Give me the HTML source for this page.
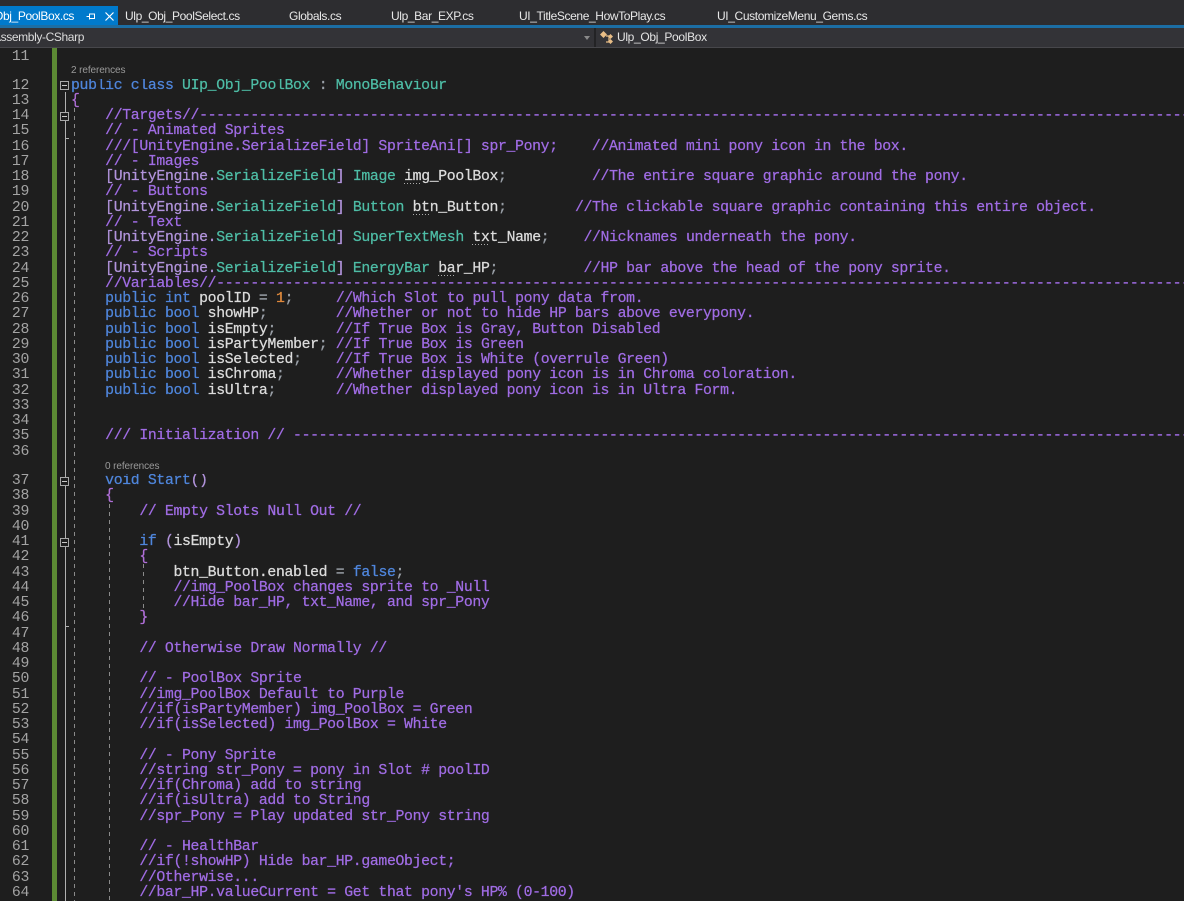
<!DOCTYPE html>
<html><head><meta charset="utf-8"><style>
html,body{margin:0;padding:0;background:#1e1e1e}
body{width:1184px;height:901px;overflow:hidden;position:relative;font-family:"Liberation Sans",sans-serif}
.a{position:absolute}
.tab{position:absolute;top:9px;font-size:12px;line-height:15px;color:#e8e8e8;white-space:pre;letter-spacing:-.38px}
pre{position:absolute;margin:0;font-family:"Liberation Mono",monospace;font-size:14.8px;letter-spacing:-.34px;line-height:15.25px;white-space:pre;color:#dcdcdc;-webkit-text-stroke:.25px}
.code{left:71px;width:1113px;overflow:hidden}
.num{left:0;width:29px;text-align:right;color:#a4a4a4;-webkit-text-stroke:0}
.c{color:#a06ce4}.k{color:#4f86dc}.t{color:#4ebda6}.b{color:#b294dc}.o{color:#e08a3c}.g{color:#9aa0a8}.m{color:#b06fd8}
u{text-decoration:none;background:repeating-linear-gradient(90deg,#aaa 0 1px,transparent 1px 3px) no-repeat 0 calc(100% - 1px)/100% 1px}
.box{position:absolute;left:60px;width:9px;height:9px;box-sizing:border-box;border:1px solid #a8a8a8;background:#1e1e1e}
.box:after{content:"";position:absolute;left:1px;top:3px;width:5px;height:1px;background:#c8c8c8}
.dash{position:absolute;width:1px;background:repeating-linear-gradient(to bottom,#8a8a8a 0 4px,transparent 4px 8px)}
.ref{position:absolute;font-size:10px;line-height:12px;color:#9a9a9a;letter-spacing:-.1px}
</style></head><body>
<div class="a" style="left:0;top:0;width:1184px;height:48px;background:#2d2d30"></div>
<div class="a" style="left:0;top:6px;width:118px;height:20px;background:#007acc"></div>
<div class="a" style="left:0;top:25px;width:1184px;height:3px;background:#1c6ea4"></div>
<div class="a" style="left:0;top:28px;width:1184px;height:19px;background:#333337"></div>
<div class="a" style="left:0;top:47px;width:1184px;height:1px;background:#47474b"></div>
<div class="tab" style="left:-6px;color:#fff">Obj_PoolBox.cs</div>
<svg class="a" style="left:85px;top:10px" width="30" height="13" viewBox="0 0 30 13"><path d="M1.5 6.5H4.5M4.5 3.5V9.5M4.5 4H9.5V8.5H4.5" stroke="#fff" fill="none" stroke-width="1"/><path d="M20.5 2.5L28.5 10.5M28.5 2.5L20.5 10.5" stroke="#fff" fill="none" stroke-width="1.2"/></svg>
<div class="tab" style="left:125px">Ulp_Obj_PoolSelect.cs</div>
<div class="tab" style="left:289px">Globals.cs</div>
<div class="tab" style="left:391px">Ulp_Bar_EXP.cs</div>
<div class="tab" style="left:519px">UI_TitleScene_HowToPlay.cs</div>
<div class="tab" style="left:717px">UI_CustomizeMenu_Gems.cs</div>
<div class="tab" style="left:-7px;top:30px;color:#dcdcdc">Assembly-CSharp</div>
<div class="a" style="left:584px;top:36px;width:0;height:0;border-left:3.5px solid transparent;border-right:3.5px solid transparent;border-top:4px solid #8a8a8a"></div>
<div class="a" style="left:594px;top:28px;width:2px;height:19px;background:#232325"></div>
<svg class="a" style="left:599px;top:30px" width="15" height="15" viewBox="0 0 15 15"><path d="M4.5 1L8 4.5L4.5 8L1 4.5Z" fill="#e8bd86"/><path d="M7 6H10V12H7" stroke="#e8bd86" fill="none" stroke-width="1.2"/><path d="M11.5 4L14 6.5L11.5 9L9 6.5ZM11.5 9L14 11.5L11.5 14L9 11.5Z" fill="#e8bd86"/></svg>
<div class="tab" style="left:617px;top:30px;color:#e4e4e4;letter-spacing:-.33px">Ulp_Obj_PoolBox</div>

<div class="a" style="left:52px;top:48px;width:5px;height:853px;background:#5c8a34"></div>
<div class="a" style="left:65px;top:92px;width:1px;height:809px;background:#b0b0b0"></div>
<div class="a" style="left:65px;top:138px;width:4px;height:1px;background:#b0b0b0"></div>
<div class="a" style="left:65px;top:626px;width:4px;height:1px;background:#b0b0b0"></div>
<div class="box" style="top:81px"></div>
<div class="box" style="top:112px"></div>
<div class="box" style="top:477px"></div>
<div class="box" style="top:538px"></div>
<div class="dash" style="left:74px;top:108px;height:793px"></div>
<div class="dash" style="left:109px;top:504px;height:397px"></div>
<div class="dash" style="left:143px;top:564px;height:46px"></div>

<pre class="num" style="top:50px">11</pre>
<pre class="num" style="top:78.6px">12
13
14
15
16
17
18
19
20
21
22
23
24
25
26
27
28
29
30
31
32
33
34
35
36</pre>
<pre class="num" style="top:474px">37
38
39
40
41
42
43
44
45
46
47
48
49
50
51
52
53
54
55
56
57
58
59
60
61
62
63
64</pre>

<div class="ref" style="left:71px;top:65px">2 references</div>
<div class="ref" style="left:105px;top:461px">0 references</div>

<pre class="code" style="top:78.6px"><span class="k">public</span> <span class="k">class</span> <span class="t">UIp_Obj_PoolBox</span> <span class="g">:</span> <span class="t">MonoBehaviour</span>
<span class="m">{</span>
<span class="c">    //Targets//------------------------------------------------------------------------------------------------------------------------------------------</span>
<span class="c">    // - Animated Sprites</span>
<span class="c">    ///[UnityEngine.SerializeField] SpriteAni[] spr_Pony;    //Animated mini pony icon in the box.</span>
<span class="c">    // - Images</span>
    <span class="b">[UnityEngine.</span><span class="t">SerializeField</span><span class="b">]</span> <span class="t">Image</span> <u>im</u>g_PoolBox<span class="g">;</span>          <span class="c">//The entire square graphic around the pony.</span>
<span class="c">    // - Buttons</span>
    <span class="b">[UnityEngine.</span><span class="t">SerializeField</span><span class="b">]</span> <span class="t">Button</span> <u>bt</u>n_Button<span class="g">;</span>        <span class="c">//The clickable square graphic containing this entire object.</span>
<span class="c">    // - Text</span>
    <span class="b">[UnityEngine.</span><span class="t">SerializeField</span><span class="b">]</span> <span class="t">SuperTextMesh</span> <u>tx</u>t_Name<span class="g">;</span>    <span class="c">//Nicknames underneath the pony.</span>
<span class="c">    // - Scripts</span>
    <span class="b">[UnityEngine.</span><span class="t">SerializeField</span><span class="b">]</span> <span class="t">EnergyBar</span> <u>ba</u>r_HP<span class="g">;</span>          <span class="c">//HP bar above the head of the pony sprite.</span>
<span class="c">    //Variables//----------------------------------------------------------------------------------------------------------------------------------------</span>
    <span class="k">public</span> <span class="k">int</span> poolID <span class="g">=</span> <span class="o">1</span><span class="g">;</span>     <span class="c">//Which Slot to pull pony data from.</span>
    <span class="k">public</span> <span class="k">bool</span> showHP<span class="g">;</span>        <span class="c">//Whether or not to hide HP bars above everypony.</span>
    <span class="k">public</span> <span class="k">bool</span> isEmpty<span class="g">;</span>       <span class="c">//If True Box is Gray, Button Disabled</span>
    <span class="k">public</span> <span class="k">bool</span> isPartyMember<span class="g">;</span> <span class="c">//If True Box is Green</span>
    <span class="k">public</span> <span class="k">bool</span> isSelected<span class="g">;</span>    <span class="c">//If True Box is White (overrule Green)</span>
    <span class="k">public</span> <span class="k">bool</span> isChroma<span class="g">;</span>      <span class="c">//Whether displayed pony icon is in Chroma coloration.</span>
    <span class="k">public</span> <span class="k">bool</span> isUltra<span class="g">;</span>       <span class="c">//Whether displayed pony icon is in Ultra Form.</span>


<span class="c">    /// Initialization // ---------------------------------------------------------------------------------------------------------------------------------</span>
</pre>
<pre class="code" style="top:474px">    <span class="k">void</span> <span class="k">Start</span><span class="b">()</span>
    <span class="m">{</span>
<span class="c">        // Empty Slots Null Out //</span>

        <span class="k">if</span> <span class="b">(</span>isEmpty<span class="b">)</span>
        <span class="m">{</span>
            btn_Button.enabled <span class="g">=</span> <span class="k">false</span><span class="g">;</span>
<span class="c">            //img_PoolBox changes sprite to _Null</span>
<span class="c">            //Hide bar_HP, txt_Name, and spr_Pony</span>
        <span class="m">}</span>

<span class="c">        // Otherwise Draw Normally //</span>

<span class="c">        // - PoolBox Sprite</span>
<span class="c">        //img_PoolBox Default to Purple</span>
<span class="c">        //if(isPartyMember) img_PoolBox = Green</span>
<span class="c">        //if(isSelected) img_PoolBox = White</span>

<span class="c">        // - Pony Sprite</span>
<span class="c">        //string str_Pony = pony in Slot # poolID</span>
<span class="c">        //if(Chroma) add to string</span>
<span class="c">        //if(isUltra) add to String</span>
<span class="c">        //spr_Pony = Play updated str_Pony string</span>

<span class="c">        // - HealthBar</span>
<span class="c">        //if(!showHP) Hide bar_HP.gameObject;</span>
<span class="c">        //Otherwise...</span>
<span class="c">        //bar_HP.valueCurrent = Get that pony's HP% (0-100)</span></pre>
</body></html>
